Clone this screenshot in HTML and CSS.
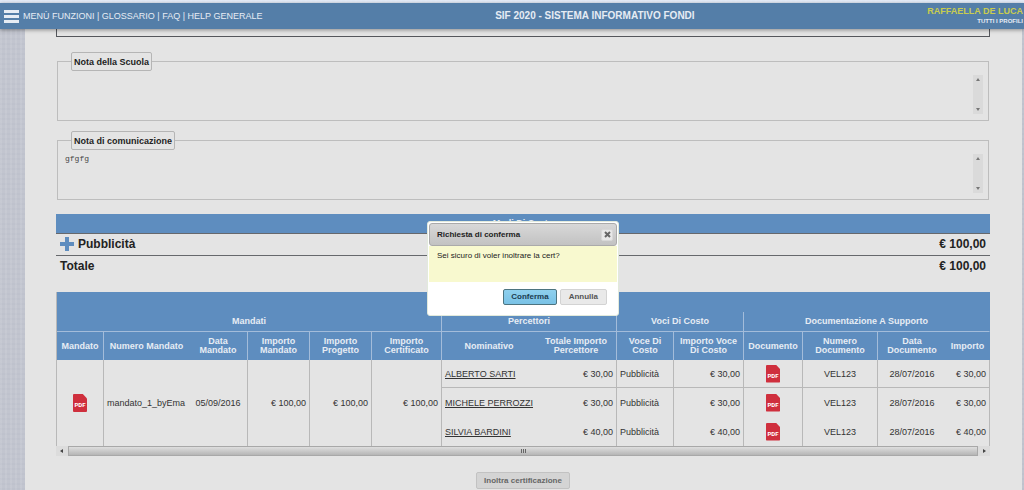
FILE: index.html
```html
<!DOCTYPE html>
<html lang="it">
<head>
<meta charset="utf-8">
<title>SIF 2020 - Sistema Informativo Fondi</title>
<link rel="stylesheet" href="styles.css">
</head>
<body>
<header class="topbar">
  <nav class="menu">
    <button class="burger" aria-label="Apri menù"><span></span><span></span><span></span></button>
    <a href="#">MENÙ FUNZIONI</a> | <a href="#">GLOSSARIO</a> | <a href="#">FAQ</a> | <a href="#">HELP GENERALE</a>
  </nav>
  <h1 class="title">SIF 2020 - SISTEMA INFORMATIVO FONDI</h1>
  <div class="user"><span class="user-name">RAFFAELLA DE LUCA</span><span class="user-role">TUTTI I PROFILI</span></div>
</header>

<main class="page">
  <div class="previous-box"></div>

  <fieldset class="note">
    <legend><label for="nota-scuola">Nota della Scuola</label></legend>
    <div class="note-body">
      <textarea id="nota-scuola" readonly></textarea>
      <div class="vbar" aria-hidden="true"><i class="up"></i><i class="down"></i></div>
    </div>
  </fieldset>
  <fieldset class="note">
    <legend><label for="nota-com">Nota di comunicazione</label></legend>
    <div class="note-body">
      <textarea id="nota-com" readonly>gfgfg</textarea>
      <div class="vbar" aria-hidden="true"><i class="up"></i><i class="down"></i></div>
    </div>
  </fieldset>

  <table class="costs">
    <thead><tr><th colspan="2">Modi Di Costo</th></tr></thead>
    <tbody>
      <tr><td><span class="cost-name"><svg width="14" height="14" viewBox="0 0 14 14" aria-hidden="true"><path d="M5 0h4v5h5v4H9v5H5V9H0V5h5z" fill="#5e8dbf"/></svg>Pubblicità</span></td><td class="num">€ 100,00</td></tr>
      <tr><td>Totale</td><td class="num">€ 100,00</td></tr>
    </tbody>
  </table>

  <div class="grid-wrap">
  <table class="grid">
    <colgroup><col class="w47"><col class="w85"><col class="w59"><col class="w62"><col class="w62"><col class="w70"><col class="w94"><col class="w81"><col class="w57"><col class="w70"><col class="w59"><col class="w75"><col class="w68"><col class="w44"></colgroup>
    <thead>
      <tr class="band"><td colspan="14"></td></tr>
      <tr class="groups"><th colspan="6">Mandati</th><th colspan="2">Percettori</th><th colspan="2">Voci Di Costo</th><th colspan="4">Documentazione A Supporto</th></tr>
      <tr class="cols"><th>Mandato</th><th class="open">Numero Mandato</th><th>Data<br>Mandato</th><th>Importo<br>Mandato</th><th>Importo<br>Progetto</th><th>Importo<br>Certificato</th><th class="open">Nominativo</th><th>Totale Importo<br>Percettore</th><th>Voce Di<br>Costo</th><th>Importo Voce<br>Di Costo</th><th>Documento</th><th>Numero<br>Documento</th><th class="open">Data<br>Documento</th><th>Importo</th></tr>
    </thead>
    <tbody>
      <tr class="ruled">
        <td rowspan="3" class="mid"><span class="pdf">PDF</span></td>
        <td rowspan="3" class="open">mandato_1_byEma</td><td rowspan="3" class="mid">05/09/2016</td>
        <td rowspan="3" class="num">€ 100,00</td><td rowspan="3" class="num">€ 100,00</td><td rowspan="3" class="num">€ 100,00</td>
        <td class="open"><a href="#">ALBERTO SARTI</a></td><td class="num">€ 30,00</td><td>Pubblicità</td><td class="num">€ 30,00</td>
        <td class="mid"><span class="pdf">PDF</span></td><td class="mid">VEL123</td><td class="mid open">28/07/2016</td><td class="num">€ 30,00</td>
      </tr>
      <tr>
        <td class="open"><a href="#">MICHELE PERROZZI</a></td><td class="num">€ 30,00</td><td>Pubblicità</td><td class="num">€ 30,00</td>
        <td class="mid"><span class="pdf">PDF</span></td><td class="mid">VEL123</td><td class="mid open">28/07/2016</td><td class="num">€ 30,00</td>
      </tr>
      <tr>
        <td class="open"><a href="#">SILVIA BARDINI</a></td><td class="num">€ 40,00</td><td>Pubblicità</td><td class="num">€ 40,00</td>
        <td class="mid"><span class="pdf">PDF</span></td><td class="mid">VEL123</td><td class="mid open">28/07/2016</td><td class="num">€ 40,00</td>
      </tr>
    </tbody>
  </table>
  <div class="hbar" aria-hidden="true"><i class="left"></i><span class="thumb"><b></b><b></b><b></b></span><i class="right"></i></div>
  </div>

  <div class="actions"><button class="submit">Inoltra certificazione</button></div>
</main>

<section class="dialog" role="dialog" aria-labelledby="dlg-title">
  <div class="dialog-head"><h2 id="dlg-title">Richiesta di conferma</h2>
    <button class="close" aria-label="Chiudi"><svg width="7" height="7" viewBox="0 0 7 7"><path d="M1 1l5 5M6 1L1 6" stroke="#666" stroke-width="2"/></svg></button></div>
  <p class="dialog-text">Sei sicuro di voler inoltrare la cert?</p>
  <div class="dialog-buttons"><button class="btn primary">Conferma</button><button class="btn">Annulla</button></div>
</section>
</body>
</html>
```
FILE: styles.css
```css
* { box-sizing: border-box; }
body {
  margin: 0;
  padding-top: 3px;
  min-height: 100vh;
  overflow: hidden;
  display: flex;
  flex-direction: column;
  font: 9px/12px "Liberation Sans", Arial, sans-serif;
  color: #333;
  background:
    repeating-linear-gradient(90deg, rgba(255,255,255,.08) 0 2px, transparent 2px 5px),
    repeating-linear-gradient(0deg, rgba(110,120,150,.04) 0 2px, transparent 2px 5px),
    linear-gradient(#e4ecf8 0 3px, #c2c5cf 3px);
}
button { font: inherit; padding: 0; cursor: pointer; }

.topbar {
  display: flex;
  justify-content: space-between;
  align-items: center;
  height: 26px;
  flex: none;
  padding: 0 1px 0 4px;
  background: #547ea8;
  color: #e6ecf4;
  box-shadow: 0 1px 4px rgba(0,0,0,.4);
  z-index: 1;
}
.menu { font-size: 9px; white-space: pre; display: flex; align-items: center; }
.menu a { color: inherit; text-decoration: none; }
.burger { display: grid; gap: 2px; width: 15px; margin-right: 4px; border: 0; background: none; }
.burger span { height: 3px; background: #e6ecf4; }
.title { margin: 0; font-size: 10px; line-height: 12px; }
.user { display: flex; flex-direction: column; align-items: flex-end; padding-bottom: 1px; font-weight: bold; }
.user-name { font-size: 9px; line-height: 11px; color: #c9cc4e; }
.user-role { font-size: 6px; line-height: 8px; }

.page { flex: 1; margin: 0 2px 0 25px; padding: 0 32px 0 31px; background: #e4e4e4; }
.previous-box { height: 8px; border: 1px solid #55575c; border-top: 0; }

.note { margin: 15px 1px 0; padding: 0 5px 6px 7px; border: 1px solid #bdbdbd; min-width: 0; }
.note + .note { margin-top: 10px; }
.note legend {
  margin-left: 6px;
  padding: 3px 2px 2px;
  border: 1px solid #b5b5b5;
  border-radius: 2px;
  font-size: 9px;
  line-height: 12px;
  font-weight: bold;
  color: #222;
}
.note-body { display: flex; padding-top: 4px; height: 43px; }
.note textarea {
  flex: 1;
  border: 0;
  padding: 0;
  resize: none;
  outline: 0;
  background: none;
  color: #444;
  font: 8px/10px "Liberation Mono", monospace;
}
.vbar { width: 10px; display: flex; flex-direction: column; justify-content: space-between; align-items: center; padding: 3px 0; background: #dadada; }
.up, .down { border: 2px solid transparent; }
.up { border-top: 0; border-bottom: 3px solid #777; }
.down { border-bottom: 0; border-top: 3px solid #777; }

.costs { width: 100%; margin-top: 14px; border-collapse: collapse; color: #222; font-size: 12px; line-height: 14px; font-weight: bold; }
.costs th { height: 19px; padding: 3px 0 0; vertical-align: top; background: #5e8dbf; color: #e6ecf4; font-size: 9px; line-height: 12px; }
.costs td { height: 22px; padding: 0 4px; border-top: 1px solid #66686c; }
.cost-name { display: flex; align-items: center; gap: 4px; }
.num { text-align: right; }

.grid-wrap { margin-top: 15px; }
.grid { width: 100%; table-layout: fixed; border-collapse: separate; border-spacing: 0; border-left: 1px solid #b8b8b8; }
.grid thead { background: #5e8dbf; color: #e6ecf4; }
.band td { height: 20px; padding: 0; }
.grid th { padding: 0; font-size: 9px; line-height: 9px; border-right: 1px solid #a3bcda; white-space: nowrap; }
.groups th { height: 20px; border-bottom: 1px solid #a3bcda; }
.cols th { height: 28px; }
.grid th:last-child { border-right-color: #5e8dbf; }
.grid tbody td { height: 29px; padding: 0 3px; border-right: 1px solid #b8b8b8; white-space: nowrap; }
.grid .ruled td:not([rowspan]) { height: 28px; border-bottom: 1px solid #b8b8b8; }
.grid .cols .open, .grid tbody .open { border-right: 0; }
.grid .mid { text-align: center; }
.grid a { color: #333; }
.pdf {
  display: block;
  width: 14px;
  height: 18px;
  margin: 0 auto;
  padding-top: 2px;
  border-radius: 1px;
  background: #cf2f3d;
  clip-path: polygon(0 0, 70% 0, 100% 25%, 100% 100%, 0 100%);
  color: #fff;
  font: bold 6px/18px Roboto, sans-serif;
  text-align: center;
}
.w44 { width: 44px; } .w47 { width: 47px; } .w57 { width: 57px; } .w59 { width: 59px; }
.w62 { width: 62px; } .w68 { width: 68px; } .w70 { width: 70px; } .w75 { width: 75px; }
.w81 { width: 81px; } .w85 { width: 85px; } .w94 { width: 94px; }

.hbar { display: flex; align-items: center; gap: 5px; height: 10px; padding: 0 4px; background: #dcdcdc; }
.left, .right { border: 2px solid transparent; }
.left { border-left: 0; border-right: 3px solid #444; }
.right { border-right: 0; border-left: 3px solid #444; }
.thumb { flex: 1; display: flex; gap: 1px; align-items: center; justify-content: center; height: 10px; border: 1px solid #a8a8a8; background: linear-gradient(#dedede, #b5b5b5); }
.thumb b { width: 1px; height: 4px; background: #666; }

.actions { display: flex; justify-content: center; margin-top: 16px; }
.submit { height: 17px; padding: 0 7px; border: 1px solid #c2c2c2; border-radius: 2px; background: #d4d4d4; color: #666; font-size: 8px; font-weight: bold; }

.dialog {
  position: absolute;
  top: 221px;
  left: 427px;
  width: 192px;
  z-index: 2;
  padding: 1px;
  background: #fff;
  border: 1px solid #e2eadc;
  border-radius: 3px;
  color: #222;
  font-size: 8px;
}
.dialog-head { display: flex; align-items: center; justify-content: space-between; height: 23px; padding: 0 3px 0 7px; border: 1px solid #aaa; border-radius: 3px; background: linear-gradient(#d8d8d8, #c2c2c2); }
.dialog-head h2 { margin: 0; font-size: 8px; line-height: 12px; }
.close { display: grid; place-items: center; width: 12px; height: 12px; border: 1px solid #d8d8d8; border-radius: 2px; background: #e8e8e8; }
.dialog-text { margin: 0; height: 36px; padding: 4px 8px; background: #f8f9cf; }
.dialog-buttons { display: flex; justify-content: flex-end; gap: 3px; padding: 7px 10px 9px; }
.btn { height: 16px; padding: 0 8px; border: 1px solid #d3d3d3; border-radius: 2px; background: #e9e9e9; color: #555; font-size: 8px; font-weight: bold; }
.primary { padding: 0 7px; border-color: #4d7480; background: linear-gradient(#8ed0ee, #79c2e6); color: #1b3c50; }
```
